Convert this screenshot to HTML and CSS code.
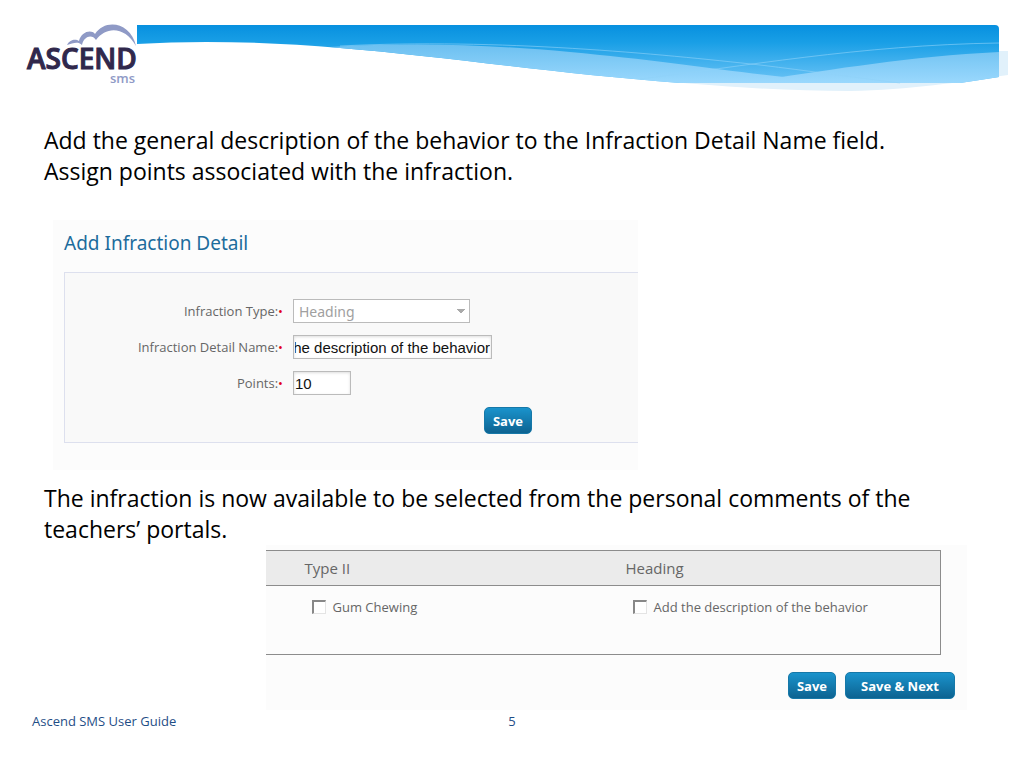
FILE: index.html
```html
<!DOCTYPE html>
<html lang="en">
<head>
  <meta charset="UTF-8">
  <meta name="viewport" content="width=device-width, initial-scale=1">
  <title>Ascend SMS User Guide</title>
  <link rel="stylesheet" href="styles.css">
</head>
<body>

  <header class="header">
    <svg class="logo" viewBox="0 0 110 64" role="img" aria-label="Ascend SMS">
      <path class="cloud" d="M40 20 C43 14 49 14 52 16 C54 7 64 4 68 9 C78 -7 104 -3 109 21 C98 1 79 1 69 15 C65 9 57 11 55 20 C51 16 46 18 40 20 Z"/>
      <text class="logo-name" x="0" y="44">ASCEND</text>
      <text class="logo-sub" x="108" y="58">sms</text>
    </svg>
    <svg class="banner" viewBox="137 25 871 66" preserveAspectRatio="none" aria-hidden="true">
      <defs>
        <linearGradient id="sky" gradientUnits="userSpaceOnUse" x1="0" y1="25" x2="0" y2="83">
          <stop offset="0" stop-color="#0790df"/>
          <stop offset="0.3" stop-color="#199fe6"/>
          <stop offset="1" stop-color="#6cc4f6"/>
        </linearGradient>
        <linearGradient id="haze" gradientUnits="userSpaceOnUse" x1="0" y1="43" x2="0" y2="83">
          <stop offset="0" stop-color="#6abff0"/>
          <stop offset="1" stop-color="#9ad8fd"/>
        </linearGradient>
      </defs>
      <path fill="#e1f1fb" d="M660 81 C740 88 790 91 850 91 C910 90 960 82 1008 75 V51 H999 V77 L960 83 Z"/>
      <path fill="url(#sky)" d="M137 25 H995 Q999 25 999 29 V77 Q980 80 960 83 H680 C560 74 440 56 340 48 C270 42 200 40 137 44 Z"/>
      <path fill="url(#haze)" d="M330 47 C420 42 490 45 570 52 C680 62 760 77 850 83 H680 C560 74 440 56 340 48 Z"/>
      <path fill="url(#haze)" d="M999 52 C900 57 820 72 740 83 H960 Q980 80 999 77 Z"/>
      <path class="streak" d="M340 46 C500 38 660 54 760 65 C810 71 850 77 900 83"/>
      <path class="streak" d="M640 79 C740 67 860 45 999 43"/>
    </svg>
  </header>

  <main>
    <p class="note">Add the general description of the behavior to the Infraction Detail Name field.<br>Assign points associated with the infraction.</p>

    <form class="detail">
      <h2>Add Infraction Detail</h2>
      <div class="fields">
        <label for="type">Infraction Type:<span class="req">•</span></label>
        <select id="type" disabled>
          <option>Heading</option>
        </select>
        <label for="name">Infraction Detail Name:<span class="req">•</span></label>
        <input class="name" id="name" type="text" value="Add the description of the behavior">
        <label for="points">Points:<span class="req">•</span></label>
        <input class="points" id="points" type="text" value="10">
        <button class="btn" type="button">Save</button>
      </div>
    </form>

    <p class="note">The infraction is now available to be selected from the personal comments of the teachers’ portals.</p>

    <form class="comments">
      <table>
        <thead>
          <tr><th class="first">Type II</th><th>Heading</th></tr>
        </thead>
        <tbody>
          <tr>
            <td><label class="check"><input type="checkbox">Gum Chewing</label></td>
            <td><label class="check"><input type="checkbox">Add the description of the behavior</label></td>
          </tr>
        </tbody>
      </table>
      <div class="actions">
        <button class="btn" type="button">Save</button>
        <button class="btn wide" type="button">Save &amp; Next</button>
      </div>
    </form>
  </main>

  <footer class="footer">
    <span>Ascend SMS User Guide</span>
    <span>5</span>
  </footer>

</body>
</html>
```
FILE: styles.css
```css
* { box-sizing: border-box; }
body { margin: 0; background: #fff; color: #000; font-family: Candara, "Open Sans", sans-serif; }

.header { display: flex; align-items: flex-start; padding: 25px 16px 0 27px; }
.logo { flex: none; width: 110px; height: 64px; overflow: visible; }
.cloud { fill: #8f9ac6; }
.logo-name { font: 600 28px "Open Sans", sans-serif; fill: #30284c; stroke: #30284c; stroke-width: 1; }
.logo-sub { font: 600 13px "Open Sans", sans-serif; fill: #8f9ac6; text-anchor: end; }
.banner { flex: 1; min-width: 0; height: 66px; }
.streak { fill: none; stroke: #8fd2f8; stroke-width: 1; opacity: 0.6; }

main { padding: 34px 57px 0 44px; }
.note { margin: 0; font-size: 23px; line-height: 31px; }

.detail { width: 585px; max-width: 100%; margin: 33px 0 13px 9px; padding: 10px 0 27px 11px; background: #fcfcfc; }
.detail h2 { margin: 0 0 16px; color: #1c6c9c; font: 400 19px/26px "Noto Sans", sans-serif; }
.fields {
  display: grid;
  grid-template-columns: 218px 239px;
  column-gap: 10px;
  row-gap: 12px;
  align-items: center;
  justify-items: start;
  padding: 26px 0 8px;
  background: #f9f9f9;
  border: 1px solid #dde0ee;
  border-right: 0;
}
.fields label { justify-self: end; color: #666; font-size: 13px; }
.req { color: #e2001a; }
.fields select, .fields input { height: 24px; border: 1px solid #bbb; background: #fff; }
.fields select {
  appearance: none;
  width: 177px;
  padding: 0 5px;
  color: #a0a0a0;
  font: 14px "Noto Sans", sans-serif;
  opacity: 1;
  /* two halves of the drop-down arrow */
  background-image: linear-gradient(to bottom left, #aaa 50%, transparent 50%), linear-gradient(to bottom right, #aaa 50%, transparent 50%);
  background-repeat: no-repeat;
  background-size: 4px 5px;
  background-position: right 8px center, right 4px center;
}
.fields input { padding: 0 1px; color: #111; font: 15px "Liberation Sans", sans-serif; box-shadow: inset 0 1px 3px #ddd; }
.fields .name { width: 199px; direction: rtl; }
.fields .points { width: 58px; }
.fields .btn { grid-column: 2; justify-self: end; }

.btn {
  height: 27px;
  padding: 0 8px;
  border: 1px solid #1678a8;
  border-radius: 5px;
  background: linear-gradient(#1a93cc, #0d6391);
  color: #fff;
  font: 700 13px "Open Sans", sans-serif;
}
.btn.wide { padding: 0 15px; }

.comments { width: 76%; margin: 0 0 0 auto; padding: 5px 12px 11px 0; background: #fcfcfc; }
table { width: 98%; border-collapse: collapse; border: 1px solid #8c8c8c; border-left: 0; table-layout: fixed; color: #666; }
th { height: 35px; padding: 0 0 0 39px; background: #ebebeb; border-bottom: 1px solid #8c8c8c; font-size: 15px; font-weight: 400; text-align: left; }
.first { width: 321px; }
td { height: 69px; padding: 12px 0 0 46px; vertical-align: top; font-size: 13px; }
.check { display: flex; align-items: center; gap: 7px; }
.check input { appearance: none; width: 14px; height: 14px; margin: 0; border: 1px solid #e4e4e4; border-top: 2px solid #888; border-left: 2px solid #888; background: #fff; }
.actions { display: flex; justify-content: flex-end; gap: 9px; margin-top: 17px; }

.footer { display: grid; grid-template-columns: 1fr auto 1fr; padding: 2px 32px; color: #1f4e86; font-size: 13px; line-height: 18px; }
```
